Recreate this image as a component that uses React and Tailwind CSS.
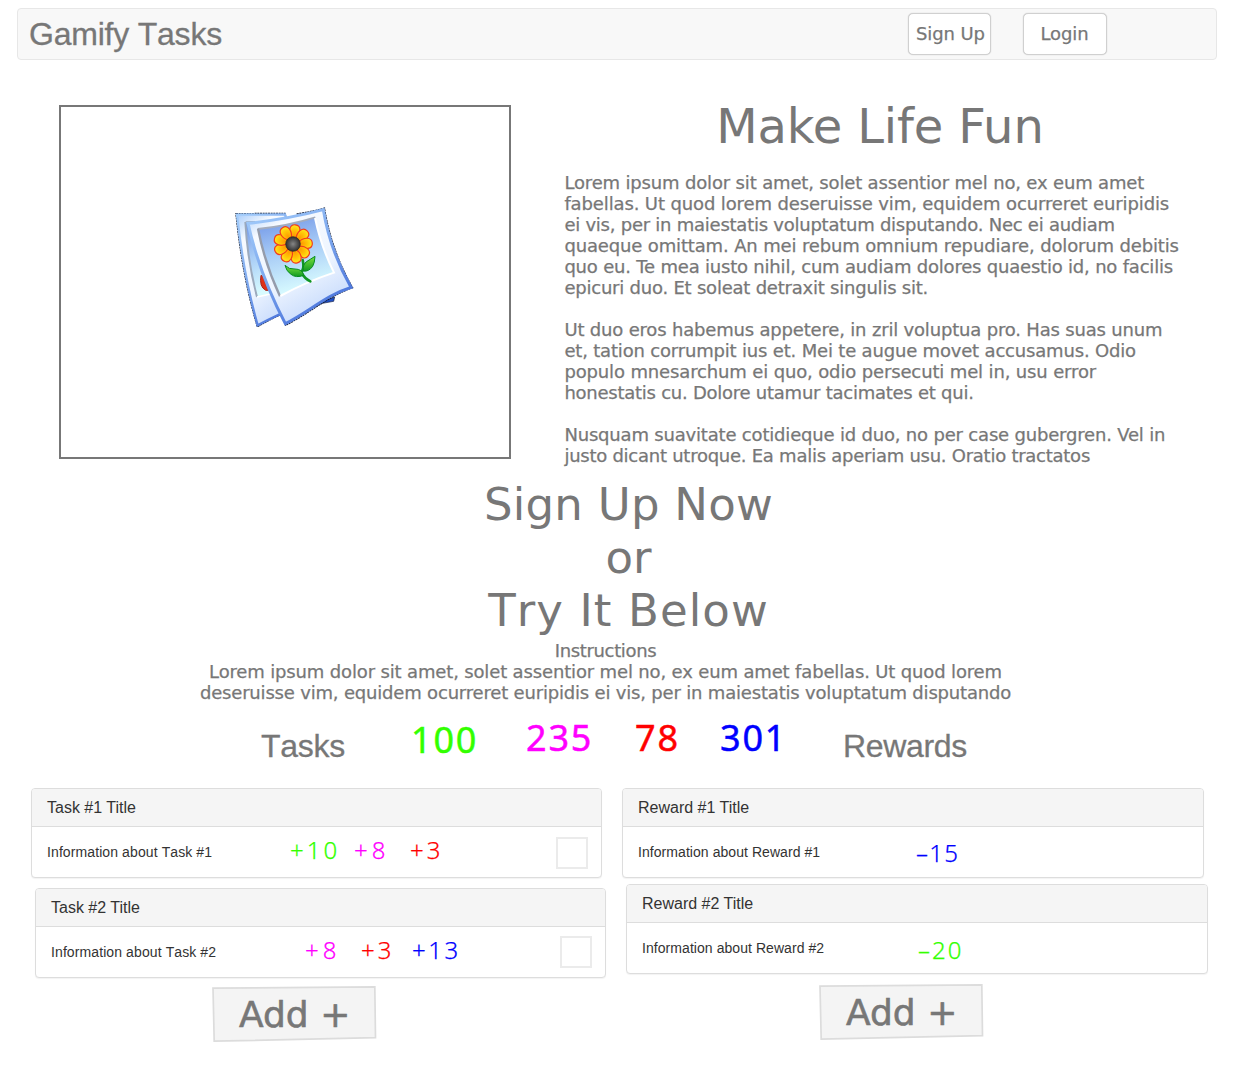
const sans = "font-['DejaVu_Sans',sans-serif]";
const arial = "font-['Liberation_Sans',sans-serif] [font-kerning:none]";

const intro = [
  [
    ["Lorem ipsum dolor sit amet, solet assentior mel no, ex eum amet", "tracking-[-0.16px]"],
    ["fabellas. Ut quod lorem deseruisse vim, equidem ocurreret euripidis", "tracking-[-0.125px]"],
    ["ei vis, per in maiestatis voluptatum disputando. Nec ei audiam", "tracking-[-0.245px]"],
    ["quaeque omittam. An mei rebum omnium repudiare, dolorum debitis", "tracking-[-0.145px]"],
    ["quo eu. Te mea iusto nihil, cum audiam dolores quaestio id, no facilis", "tracking-[-0.2px]"],
    ["epicuri duo. Et soleat detraxit singulis sit.", "tracking-[-0.22px]"],
  ],
  [
    ["Ut duo eros habemus appetere, in zril voluptua pro. Has suas unum", "tracking-[-0.18px]"],
    ["et, tation corrumpit ius et. Mei te augue movet accusamus. Odio", "tracking-[-0.18px]"],
    ["populo mnesarchum ei quo, odio persecuti mel in, usu error", "tracking-[-0.14px]"],
    ["honestatis cu. Dolore utamur tacimates et qui.", "tracking-[-0.25px]"],
  ],
  [
    ["Nusquam suavitate cotidieque id duo, no per case gubergren. Vel in", "tracking-[-0.185px]"],
    ["justo dicant utroque. Ea malis aperiam usu. Oratio tractatos", "tracking-[-0.255px]"],
  ],
];

const petals = [0, 40, 80, 120, 160, 200, 240, 280, 320];

function PhotoIcon() {
  return (
    <svg className="h-[135px] w-[140px]" viewBox="0 0 420 405">
      <defs>
        <linearGradient id="sky" x1="0" y1="0" x2="0.25" y2="1">
          <stop offset="0" stopColor="#6e93e6" />
          <stop offset="0.5" stopColor="#a9cdf6" />
          <stop offset="1" stopColor="#d8fbff" />
        </linearGradient>
        <linearGradient id="paper" x1="0" y1="0" x2="0.5" y2="1">
          <stop offset="0" stopColor="#a9cdfb" />
          <stop offset="0.22" stopColor="#f6faff" />
          <stop offset="0.65" stopColor="#eef5ff" />
          <stop offset="1" stopColor="#c9dcfc" />
        </linearGradient>
        <linearGradient id="edge" x1="0" y1="0" x2="0.6" y2="1">
          <stop offset="0" stopColor="#a3cdfb" />
          <stop offset="0.5" stopColor="#7ea9ee" />
          <stop offset="1" stopColor="#4a74dc" />
        </linearGradient>
        <linearGradient id="leaf" x1="0" y1="0" x2="0" y2="1">
          <stop offset="0" stopColor="#7de23f" />
          <stop offset="1" stopColor="#109a22" />
        </linearGradient>
        <radialGradient id="petal" cx="0.5" cy="0.8" r="0.8">
          <stop offset="0" stopColor="#ff9900" />
          <stop offset="0.6" stopColor="#ffc808" />
          <stop offset="1" stopColor="#ffe820" />
        </radialGradient>
        <radialGradient id="core">
          <stop offset="0" stopColor="#858585" />
          <stop offset="1" stopColor="#303030" />
        </radialGradient>
      </defs>
      <path d="M230 325 L329 291 L326 304 L292 310 Q262 322 230 338Z" fill="#1f4fc6" stroke="#101c44" strokeWidth="2" />
      <path d="M33 41 L180 40 L240 312 Q160 344 97 380 Q51 225 33 41Z" fill="none" stroke="#10182e" strokeWidth="4" strokeDasharray="6 2" />
      <path d="M36 44 L180 43 L240 310 Q160 342 98 376 Q55 225 36 44Z" fill="url(#paper)" stroke="url(#edge)" strokeWidth="7" />
      <path d="M61 66 L130 64 L160 280 L96 291 Q67 180 61 66Z" fill="url(#sky)" />
      <path d="M61 66 Q67 180 96 291" fill="none" stroke="#9caabd" strokeWidth="6" />
      <path d="M62 66 L90 65" fill="none" stroke="#9caabd" strokeWidth="4" />
      <path d="M96 291 L150 279" fill="none" stroke="#fff" strokeWidth="5" />
      <path d="M108 226 Q102 260 122 271 L130 271 L114 230Z" fill="#df3018" stroke="#a82018" strokeWidth="3" />
      <path d="M215 42 Q260 36 298 25 Q318 150 382 263 C309 288 251 341 180 376" fill="none" stroke="#10182e" strokeWidth="5" strokeDasharray="6 2" />
      <path d="M69 70 Q190 57 295 29 Q315 151 378 262 C306 284 251 336 181 371 Q103 222 69 70Z" fill="url(#paper)" stroke="url(#edge)" strokeWidth="9" />
      <path d="M98 86 Q190 77 270 53 Q288 140 327 218 Q245 245 165 289 Q119 190 98 86Z" fill="url(#sky)" />
      <path d="M98 87 Q190 77 271 52" fill="none" stroke="#a4adbd" strokeWidth="6" />
      <path d="M99 86 Q119 190 165 289" fill="none" stroke="#959cab" strokeWidth="7" />
      <path d="M270 54 Q288 140 327 218 Q245 245 166 288" fill="none" stroke="#fff" strokeWidth="6" />
      <path d="M233 180 Q239 204 229 217 Q238 235 256 244" fill="none" stroke="#109523" strokeWidth="8" strokeLinecap="round" />
      <path d="M180 196 Q192 209 210 207 Q232 207 236 226 Q213 235 198 223 Q184 214 180 196Z" fill="url(#leaf)" stroke="#078c22" strokeWidth="3" />
      <path d="M270 169 Q269 189 263 199 Q251 216 235 213 Q232 193 246 184 Q254 179 270 169Z" fill="url(#leaf)" stroke="#078c22" strokeWidth="3" />
      <g transform="translate(204 132)">
        {petals.map((angle) => (
          <path key={angle} transform={`rotate(${angle + 8})`} d="M-5 -17 C-20 -32 -20 -57 -1 -58 C19 -59 19 -34 5 -17Z" fill="url(#petal)" stroke="#f23c1c" strokeWidth="3.5" />
        ))}
        <circle r="22" fill="url(#core)" stroke="#252525" strokeWidth="2" />
      </g>
    </svg>
  );
}

function NavButton({ children, className }) {
  return (
    <button className={`${sans} h-[42px] rounded-[5px] border border-[#d0d0d0] bg-white text-[18px] leading-[38px] tracking-[-0.1px] whitespace-nowrap text-[#777] shadow-[0_0_1px_#bbb] [-webkit-text-stroke:0.25px_#777] ${className}`}>
      {children}
    </button>
  );
}

function Card({ title, info, className, infoClass, children }) {
  return (
    <article className={`font-['Liberation_Sans',sans-serif] h-[90px] rounded-[4px] border border-[#ddd] bg-white text-[#333] shadow-[0_1px_1px_rgba(0,0,0,0.05)] ${className}`}>
      <h3 className="h-[38px] rounded-t-[3px] border-b border-[#ddd] bg-[#f5f5f5] pl-[15px] text-[16px] leading-[37px]">{title}</h3>
      <div className="flex h-[50px] items-start pl-[15px]">
        <p className={`w-[243px] shrink-0 text-[14px] leading-[50px] whitespace-nowrap [font-kerning:none] ${infoClass}`}>{info}</p>
        {children}
      </div>
    </article>
  );
}

function Points({ children, className }) {
  return <span className={`shrink-0 font-['Noto_Sans',sans-serif] text-[24px] leading-[24px] font-light whitespace-nowrap [-webkit-text-stroke:0.25px_currentColor] ${className}`}>{children}</span>;
}

function Total({ children, className }) {
  return <span className={`shrink-0 font-['Noto_Sans',sans-serif] text-[36px] leading-[36px] font-normal tracking-[1.8px] whitespace-nowrap [-webkit-text-stroke:0.5px_currentColor] ${className}`}>{children}</span>;
}

function AddButton({ className }) {
  return (
    <button className={`${sans} relative block h-[58px] w-[166px] text-left ${className}`}>
      <svg className="absolute inset-0" width="166" height="58" viewBox="0 0 166 58">
        <path d="M1 3.2 L162.8 1.8 L163.5 52.7 L2.2 56.2Z" fill="#f4f4f4" stroke="#dcdcdc" strokeWidth="1.7" />
      </svg>
      <span className="relative block pt-px pl-[27px] text-[36px] leading-[36px] whitespace-nowrap text-[#777] [-webkit-text-stroke:0.6px_#777]">Add +</span>
    </button>
  );
}

export default function App() {
  return (
    <div className="h-[1080px] w-[1250px] overflow-hidden bg-white pt-2 text-[#777]">
      <nav className="ml-[17px] flex h-[52px] w-[1200px] rounded-[4px] border border-[#e7e7e7] bg-[#f8f8f8]">
        <h1 className={`${arial} w-[890px] pl-[11px] text-[32px] leading-[50px] tracking-[-0.22px] [-webkit-text-stroke:0.3px_#777]`}>Gamify Tasks</h1>
        <NavButton className="mt-1 w-[83px] pl-[2px]">Sign Up</NavButton>
        <NavButton className="mt-1 ml-[32px] w-[84px] pr-px">Login</NavButton>
      </nav>

      <section className="flex h-[418px] pt-[42px] pl-[59px]">
        <div className="mt-[3px] h-[354px] w-[452px] border-2 border-[#777] pt-[93px] pl-[164px]">
          <PhotoIcon />
        </div>
        <div className={`${sans} ml-[53px] w-[632px]`}>
          <h2 className="text-center text-[48px] leading-[48px] tracking-[-0.15px]">Make Life Fun</h2>
          <div className="mt-[22px] pl-[0.4px] text-[18px] leading-[21px] [-webkit-text-stroke:0.25px_#777]">
            {intro.map((lines, i) => (
              <p key={i} className="mb-[21px] whitespace-nowrap">
                {lines.map(([line, spacing]) => <span key={line} className={`block ${spacing}`}>{line}</span>)}
              </p>
            ))}
          </div>
        </div>
      </section>

      <section className={`${sans} text-center`}>
        <h2 className="ml-[7px] text-[45px] leading-[53px]">
          <span className="block tracking-[0.25px]">Sign Up Now</span>
          <span className="block">or</span>
          <span className="block tracking-[1.1px] [font-kerning:none]">Try It Below</span>
        </h2>
        <p className="mt-[3px] mr-[39px] text-[18px] leading-[21px] [-webkit-text-stroke:0.25px_#777]">
          <span className="block tracking-[-0.35px]">Instructions</span>
          <span className="block tracking-[-0.15px]">Lorem ipsum dolor sit amet, solet assentior mel no, ex eum amet fabellas. Ut quod lorem</span>
          <span className="block tracking-[-0.185px]">deseruisse vim, equidem ocurreret euripidis ei vis, per in maiestatis voluptatum disputando</span>
        </p>
      </section>

      <section className="mt-4 flex h-[69px] items-start pl-[261px]">
        <h2 className={`${arial} mt-[11px] w-[150px] text-[32px] leading-[32px] tracking-[-0.25px] [-webkit-text-stroke:0.3px_#777]`}>Tasks</h2>
        <Total className="mt-[3px] w-[115px] text-[#3f0]">100</Total>
        <Total className="mt-px w-[109px] text-[#f0f]">235</Total>
        <Total className="mt-px w-[85px] text-[#f00]">78</Total>
        <Total className="mt-px w-[123px] text-[#00f]">301</Total>
        <h2 className={`${arial} mt-[11px] text-[32px] leading-[32px] tracking-[-0.35px] [-webkit-text-stroke:0.3px_#777]`}>Rewards</h2>
      </section>

      <main className="flex pl-[31px]">
        <section className="w-[591px]">
          <Card title="Task #1 Title" info="Information about Task #1" infoClass="tracking-[0.1px]" className="w-[571px]">
            <Points className="mt-[11px] w-[64px] tracking-[3px] text-[#3f0]">+10</Points>
            <Points className="mt-[11px] w-[56px] tracking-[4px] text-[#f0f]">+8</Points>
            <Points className="mt-[11px] w-[146px] tracking-[3px] text-[#f00]">+3</Points>
            <span className="mt-[10px] h-8 w-8 border-2 border-[#ebebeb]" />
          </Card>
          <Card title="Task #2 Title" info="Information about Task #2" infoClass="tracking-[0.1px]" className="mt-[10px] ml-1 w-[571px]">
            <Points className="mt-[11px] ml-[11px] w-[56px] tracking-[4px] text-[#f0f]">+8</Points>
            <Points className="mt-[11px] w-[51px] tracking-[3px] text-[#f00]">+3</Points>
            <Points className="mt-[11px] w-[148px] tracking-[2.5px] text-[#00f]">+13</Points>
            <span className="mt-[9px] h-8 w-8 border-2 border-[#ebebeb]" />
          </Card>
          <AddButton className="mt-[7px] ml-[181px]" />
        </section>
        <section className="w-[590px]">
          <Card title="Reward #1 Title" info="Information about Reward #1" infoClass="tracking-[0.06px]" className="w-[582px]">
            <Points className="mt-[14px] ml-[35px] tracking-[1.3px] text-[#00f]">–15</Points>
          </Card>
          <Card title="Reward #2 Title" info="Information about Reward #2" infoClass="tracking-[0.06px]" className="mt-[6px] ml-1 w-[582px]">
            <Points className="mt-[15px] ml-[33px] tracking-[2px] text-[#3f0]">–20</Points>
          </Card>
          <AddButton className="mt-[9px] ml-[197px]" />
        </section>
      </main>
    </div>
  );
}
